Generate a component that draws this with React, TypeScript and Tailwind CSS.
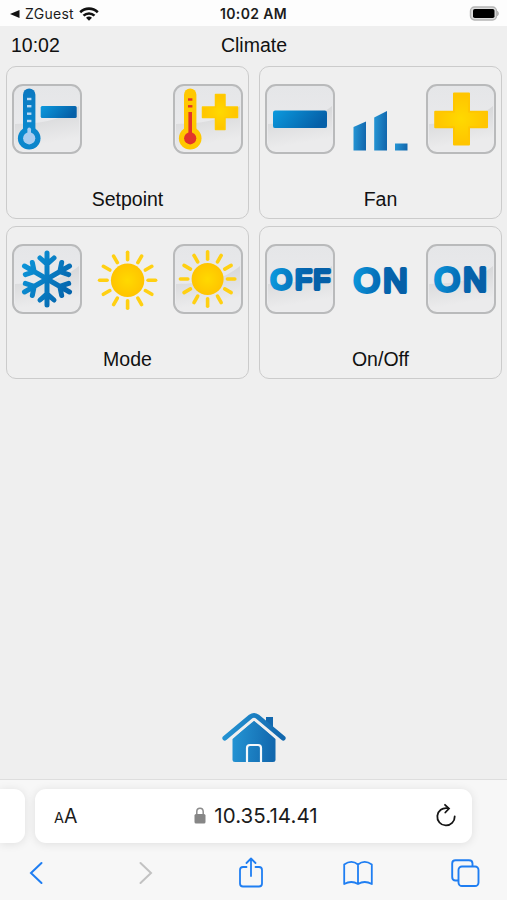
import type { ReactNode } from "react";

type ButtonProps = {
  label: string;
  children: ReactNode;
};

type PanelProps = {
  title: string;
  children: ReactNode;
};

type SunProps = {
  cy: number;
  radius: number;
  from: number;
  to: number;
};

type WordProps = {
  text: string;
  // one start position per letter
  x: string;
  y: number;
  size: number;
};

const SUN_ANGLES = [0, 30, 60, 90, 120, 150, 180, 210, 240, 270, 300, 330];
const FLAKE_ANGLES = [0, 60, 120, 180, 240, 300];

// Gradients shared by every icon on the page
function Gradients() {
  return (
    <svg className="absolute h-0 w-0" aria-hidden="true">
      <defs>
        <linearGradient id="blue" x1="0" y1="0" x2="1" y2="0.3">
          <stop offset="0" stopColor="#0c9ade" />
          <stop offset="1" stopColor="#0560a8" />
        </linearGradient>
        <linearGradient id="blueWord" gradientUnits="userSpaceOnUse" x1="6" y1="30" x2="50" y2="36">
          <stop offset="0" stopColor="#0c9ade" />
          <stop offset="0.7" stopColor="#0566b0" />
          <stop offset="1" stopColor="#0560a8" />
        </linearGradient>
        <linearGradient id="blueFlake" gradientUnits="userSpaceOnUse" x1="8" y1="20" x2="62" y2="50">
          <stop offset="0" stopColor="#0c97db" />
          <stop offset="1" stopColor="#0560a8" />
        </linearGradient>
        <linearGradient id="blueBar" x1="0" y1="0" x2="1" y2="0.1">
          <stop offset="0" stopColor="#2596d5" />
          <stop offset="1" stopColor="#1268ae" />
        </linearGradient>
        <radialGradient id="blueTube" gradientUnits="userSpaceOnUse" cx="14" cy="50" r="46">
          <stop offset="0" stopColor="#0a8bd0" />
          <stop offset="1" stopColor="#0b78c0" />
        </radialGradient>
        <radialGradient id="yellow">
          <stop offset="0" stopColor="#ffd900" />
          <stop offset="1" stopColor="#ffc400" />
        </radialGradient>
        <linearGradient id="gloss" x1="0" y1="0" x2="0.25" y2="1">
          <stop offset="0" stopColor="#d0d1d3" />
          <stop offset="0.9" stopColor="#ebebec" />
        </linearGradient>
      </defs>
    </svg>
  );
}

function GlossButton({ label, children }: ButtonProps) {
  return (
    <button
      aria-label={label}
      className="size-[70px] overflow-hidden rounded-[11px] border-2 border-[#b9babb] bg-linear-to-b from-[#e5e6e8] to-[#ececee]"
    >
      <svg viewBox="2 2 66 66" className="size-full">
        <path d="M3 40C32 39.500 50 36 67 22V60Q67 67 60 67H10Q3 67 3 60Z" fill="url(#gloss)" />
        {children}
      </svg>
    </button>
  );
}

function Panel({ title, children }: PanelProps) {
  return (
    <section className="flex h-[153px] flex-col justify-between rounded-[10px] border border-[#cbcbcb] px-[5px] pt-[17px] pb-1.5">
      <div className="flex h-[70px] justify-between">{children}</div>
      <h2 className="text-center text-[19.5px] leading-[26px] text-[#111]">{title}</h2>
    </section>
  );
}

function Thermometer({ hot }: { hot?: boolean }) {
  const body = hot ? "#ffc800" : "url(#blueTube)";
  const fluid = hot ? "#e2332b" : "#a8cdf0";
  const ticks = hot ? [15.5, 22.3] : [15, 22.2, 29.7, 37];
  return (
    <g>
      <rect x="11" y="4.500" width="12.4" height="50" rx="6.2" fill={body} />
      <circle cx="17.2" cy="54.3" r="11.3" fill={body} />
      {ticks.map((y) => (
        <rect key={y} x="15" y={y - 1.2} width="4.4" height="2.4" fill={hot ? "#e2332b" : "#b8d8f2"} />
      ))}
      <rect x="15.4" y={hot ? 28 : 43.5} width="3.6" height={hot ? 24 : 10} rx={hot ? 0 : 1.8} fill={fluid} />
      <circle cx="17.2" cy="54.3" r="6.1" fill={fluid} />
    </g>
  );
}

function Sun({ cy, radius, from, to }: SunProps) {
  return (
    <g>
      <circle cx="34.6" cy={cy} r={radius} fill="url(#yellow)" />
      {SUN_ANGLES.map((angle) => (
        <path
          key={angle}
          d={`M34.6 ${cy - from}V${cy - to}`}
          transform={`rotate(${angle} 34.6 ${cy})`}
          stroke="#ffd012"
          strokeWidth="3.6"
          strokeLinecap="round"
        />
      ))}
    </g>
  );
}

function Snowflake() {
  return (
    <g fill="none" stroke="url(#blueFlake)" strokeWidth="5" strokeLinecap="round">
      {FLAKE_ANGLES.map((angle) => {
        const a = (angle * Math.PI) / 180;
        const p = (x: number, y: number) =>
          `${35 + x * Math.cos(a) - y * Math.sin(a)} ${35 + x * Math.sin(a) + y * Math.cos(a)}`;
        return (
          <path key={angle} d={`M${p(0, 0)}L${p(0, -26)}M${p(-7, -21)}L${p(0, -14.8)}L${p(7, -21)}`} />
        );
      })}
    </g>
  );
}

// A thick round stroke over the regular weight gives the soft letter ends
function Word({ text, x, y, size }: WordProps) {
  return (
    <text
      x={x}
      y={y}
      fontSize={size}
      fill="url(#blueWord)"
      stroke="url(#blueWord)"
      strokeWidth="4"
      strokeLinejoin="round"
      className="font-['Liberation_Sans',Arial,sans-serif]"
    >
      {text}
    </text>
  );
}

function StatusBar() {
  return (
    <header className="grid h-[26px] grid-cols-3 items-center bg-[#fdfdfd] px-[10px] font-['Inter',sans-serif] text-[14px] leading-none text-[#1c1c1c]">
      <div className="flex items-center pt-0.5">
        <svg viewBox="0 0 10 8" className="h-2 w-2.5">
          <path d="M0 4L9.5 0V8Z" fill="#111" />
        </svg>
        <span className="ml-[5px] tracking-[0.3px]">ZGuest</span>
        <svg viewBox="0 0 20 14" className="ml-[5px] h-3.5 w-5" fill="none" stroke="#111" strokeWidth="2.6">
          <path d="M1.2 5.2C6.2.4 13.800.4 18.800 5.2" />
          <path d="M4.500 8.600C7.600 5.700 12.400 5.700 15.500 8.600" />
          <path d="M10 13.800L7 10.800Q10 8.400 13 10.800Z" fill="#111" stroke="none" />
        </svg>
      </div>
      <span className="pt-0.5 text-center text-[14px] font-semibold tracking-[0.35px] whitespace-nowrap">10:02 AM</span>
      <svg viewBox="0 0 31 15" className="-mr-[3px] h-[15px] w-[31px] justify-self-end">
        <rect x="1.500" y="1" width="26" height="13" rx="4" fill="#dedede" stroke="#b5b5b5" strokeWidth="1.4" />
        <rect x="4" y="3" width="21.500" height="9" rx="1.8" fill="#000" />
        <path d="M28.500 5.200Q30.500 7.500 28.500 9.800Z" fill="#b5b5b5" stroke="#b5b5b5" />
      </svg>
    </header>
  );
}

function HomeIcon() {
  return (
    <svg viewBox="0 0 64 50" className="h-[50px] w-16 overflow-visible">
      <path d="M44 15V4H51V22Z" fill="#1268ae" />
      <path
        d="M10.500 26L32 7L53.500 26V46.500Q53.500 49 51 49H13Q10.500 49 10.500 46.500Z"
        fill="url(#blueBar)"
      />
      <path
        d="M5 27L32 5L59 27"
        fill="none"
        stroke="#efefef"
        strokeWidth="4.200"
        strokeLinejoin="round"
      />
      <path
        d="M2.800 25.200L28.500 3.700Q32 1 35.500 3.700L61.200 25.200"
        fill="none"
        stroke="url(#blueBar)"
        strokeWidth="4.800"
        strokeLinecap="round"
      />
      <path d="M25 49.500V35Q25 32 28 32H36Q39 32 39 35V49.500" fill="none" stroke="#f4f8fb" strokeWidth="2.2" />
    </svg>
  );
}

function BrowserBar() {
  return (
    <footer className="flex h-[121px] flex-col overflow-hidden border-t border-[#dedede] bg-[#f7f7f7] pt-[9px] font-['Inter',sans-serif]">
      <div className="flex h-[54px] gap-2.5">
        <div className="w-[25px] rounded-r-[11px] bg-white shadow-[0_1px_10px_rgba(0,0,0,0.1)]" />
        <div className="grid w-[437px] grid-cols-[1fr_auto_1fr] items-center rounded-[11px] bg-white pr-[15px] pl-[19px] text-[#1b1b1b] shadow-[0_1px_10px_rgba(0,0,0,0.1)]">
          <span className="pt-0.5 leading-none">
            <span className="text-[14.5px]">A</span>
            <span className="text-[19.5px]">A</span>
          </span>
          <div className="flex items-center gap-2">
            <svg viewBox="0 0 12 17" className="h-[17px] w-3">
              <path d="M2.800 8V4.800Q2.800 1.200 6 1.200T9.200 4.800V8" fill="none" stroke="#8c8c8c" strokeWidth="1.500" />
              <rect x="0.500" y="7" width="11" height="9.500" rx="1.500" fill="#868686" />
            </svg>
            <span className="-mr-px pt-px text-[20.5px] leading-none tracking-[0.05px]">10.35.14.41</span>
          </div>
          <svg
            viewBox="0 0 22 24"
            className="mb-0.5 h-6 w-[22px] justify-self-end"
            fill="none"
            stroke="#151515"
            strokeWidth="1.800"
            strokeLinecap="round"
          >
            <path d="M12.500 5.200A8.700 8.700 0 1 0 19.700 13.500" />
            <path d="M10 1.800L14 5.500L10.300 9.500" />
          </svg>
        </div>
      </div>
      <nav className="flex h-[58px] items-center justify-between pt-1 pr-[27px] pl-[29px] text-[#1f7ef2]">
        <svg viewBox="0 0 14 24" className="h-6 w-3.5" fill="none" stroke="currentColor" strokeWidth="2" strokeLinecap="round">
          <path d="M12.500 2L2 12L12.500 22" />
        </svg>
        <svg viewBox="0 0 14 24" className="ml-[17px] h-6 w-3.5" fill="none" stroke="#c2c2c2" strokeWidth="2" strokeLinecap="round">
          <path d="M1.500 2L12 12L1.500 22" />
        </svg>
        <svg viewBox="0 0 26 32" className="mb-0.5 ml-[7px] h-8 w-[26px]" fill="none" stroke="currentColor" strokeWidth="1.800" strokeLinecap="round" strokeLinejoin="round">
          <path d="M8.500 11H5Q2 11 2 14V27.500Q2 30.500 5 30.500H21Q24 30.500 24 27.500V14Q24 11 21 11H17.500" />
          <path d="M13 20V3M8.500 7L13 2.500L17.500 7" />
        </svg>
        <svg viewBox="0 0 30 26" className="h-[26px] w-[30px]" fill="none" stroke="currentColor" strokeWidth="1.800" strokeLinejoin="round">
          <path d="M15 4.500Q8.500-.6 1.200 4.500V24Q8.500 20 15 24Q21.500 20 28.800 24V4.500Q21.500-.6 15 4.500V24" />
        </svg>
        <svg viewBox="0 0 29 28" className="h-7 w-[29px]" fill="none" stroke="currentColor" strokeWidth="1.900">
          <path d="M7 21.500H4.500Q1.200 21.500 1.200 18V4.500Q1.200 1.200 4.500 1.200H18Q21.500 1.200 21.500 4.500V7" />
          <rect x="7.500" y="7.500" width="20" height="19.500" rx="3.500" />
        </svg>
      </nav>
    </footer>
  );
}

export default function App() {
  return (
    <div className="flex h-[900px] w-[507px] flex-col overflow-hidden bg-[#efefef] font-['Liberation_Sans',Arial,sans-serif]">
      <Gradients />
      <StatusBar />
      <main className="flex flex-1 flex-col pr-[5px] pl-[6px]">
        <div className="grid h-10 grid-cols-3 items-center pb-px text-[19.5px] leading-none text-[#111]">
          <span className="pl-[5px]">10:02</span>
          <h1 className="text-center">Climate</h1>
        </div>
        <div className="grid grid-cols-2 gap-x-2.5 gap-y-[7px]">
          <Panel title="Setpoint">
            <GlossButton label="Lower setpoint">
              <Thermometer />
              <rect x="28.700" y="22" width="36" height="12" rx="1.500" fill="url(#blue)" />
            </GlossButton>
            <GlossButton label="Raise setpoint">
              <Thermometer hot />
              <path
                d="M42.500 10.500H52V23H64.500V33.500H52V45.500H42.500V33.500H29.500V23H42.500Z"
                fill="url(#yellow)"
                stroke="#ffcb00"
                strokeWidth="1.500"
                strokeLinejoin="round"
              />
            </GlossButton>
          </Panel>
          <Panel title="Fan">
            <GlossButton label="Slower fan">
              <rect x="8" y="26.500" width="54" height="17.600" rx="2.200" fill="url(#blue)" />
            </GlossButton>
            <svg viewBox="0 0 70 70" className="size-[70px]">
              <path d="M7.500 43L20 37.500V66.500H7.500Z" fill="url(#blueBar)" />
              <path d="M28.200 33.500L41 27V66.500H28.200Z" fill="url(#blueBar)" />
              <path d="M49 59.500H61.500V66.500H49Z" fill="url(#blueBar)" />
            </svg>
            <GlossButton label="Faster fan">
              <path
                d="M28 9.500H43V27.800H61V43.300H43V60.500H28V43.300H9.200V27.800H28Z"
                fill="url(#yellow)"
                stroke="#ffc600"
                strokeWidth="2"
                strokeLinejoin="round"
              />
            </GlossButton>
          </Panel>
          <Panel title="Mode">
            <GlossButton label="Cool">
              <Snowflake />
            </GlossButton>
            <svg viewBox="0 0 70 70" className="size-[70px]">
              <Sun cy={36.3} radius={16.7} from={20.5} to={28} />
            </svg>
            <GlossButton label="Heat">
              <Sun cy={35} radius={16} from={19.8} to={27.2} />
            </GlossButton>
          </Panel>
          <Panel title="On/Off">
            <GlossButton label="Switch off">
              <Word text="OFF" x="5.7 30.2 48.6" y={44.600} size={27} />
            </GlossButton>
            <svg viewBox="0 0 70 70" className="size-[70px]">
              <Word text="ON" x="7.8 37.2" y={48.200} size={33.500} />
            </svg>
            <GlossButton label="Switch on">
              <Word text="ON" x="8.600 37.300" y={46.800} size={32.500} />
            </GlossButton>
          </Panel>
        </div>
        <div className="mt-auto mb-4 flex justify-center">
          <HomeIcon />
        </div>
      </main>
      <BrowserBar />
    </div>
  );
}
